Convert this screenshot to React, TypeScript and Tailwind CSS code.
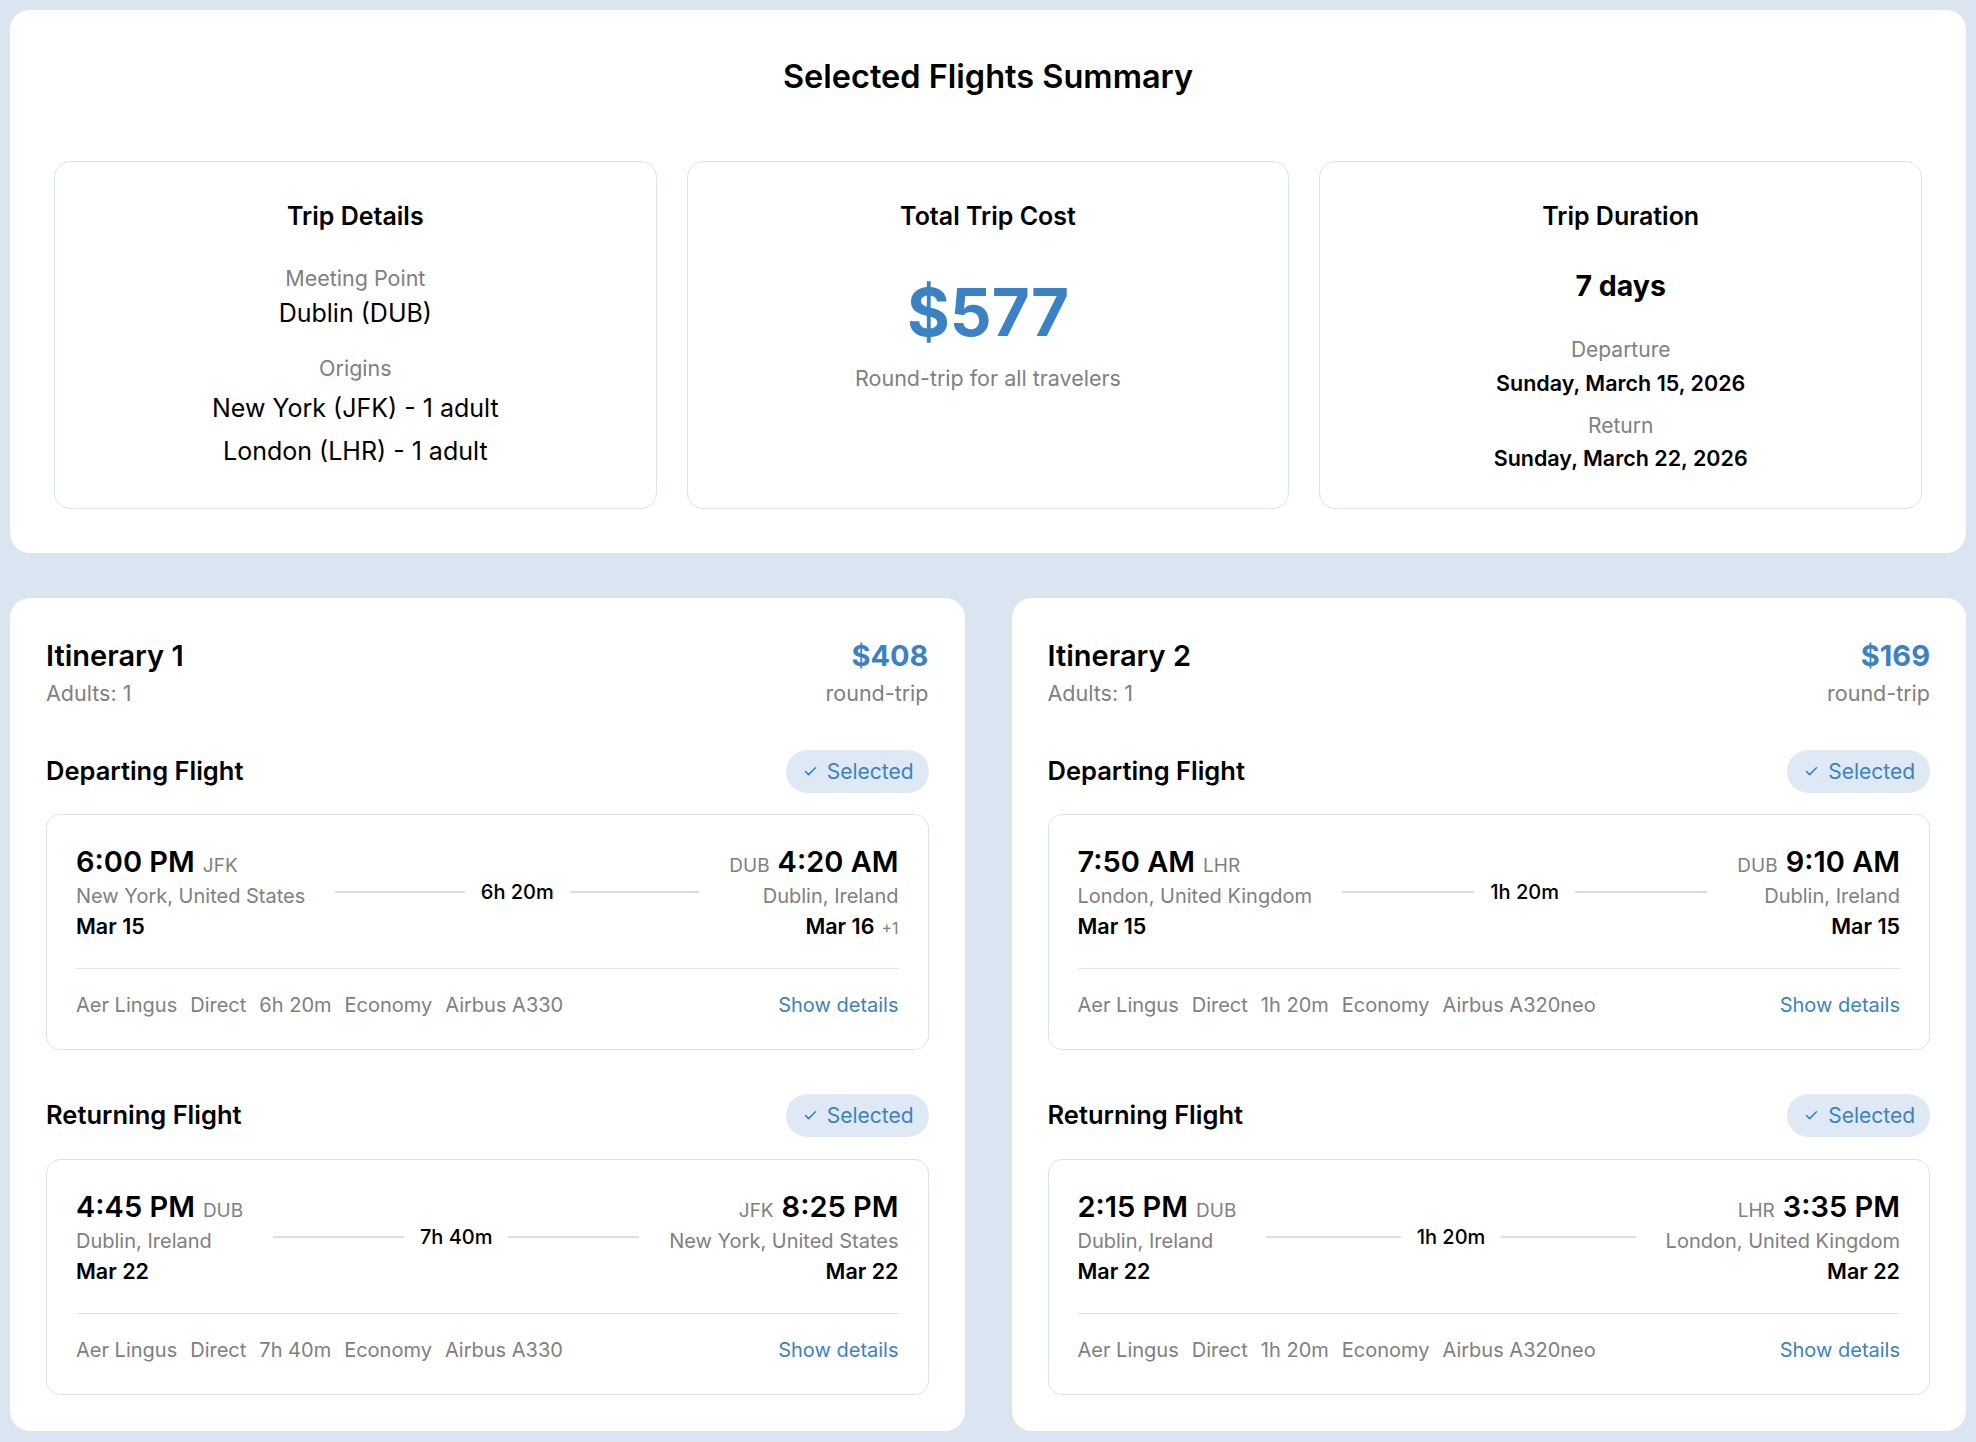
import React from "react";

type Flight = {
  depTime: string;
  depCode: string;
  depCity: string;
  depDate: string;
  arrTime: string;
  arrCode: string;
  arrCity: string;
  arrDate: string;
  plusDay?: string;
  duration: string;
  aircraft: string;
};

const itineraries: { name: string; price: string; flights: [Flight, Flight] }[] = [
  {
    name: "Itinerary 1",
    price: "$408",
    flights: [
      {
        depTime: "6:00 PM",
        depCode: "JFK",
        depCity: "New York, United States",
        depDate: "Mar 15",
        arrTime: "4:20 AM",
        arrCode: "DUB",
        arrCity: "Dublin, Ireland",
        arrDate: "Mar 16",
        plusDay: "+1",
        duration: "6h 20m",
        aircraft: "Airbus A330",
      },
      {
        depTime: "4:45 PM",
        depCode: "DUB",
        depCity: "Dublin, Ireland",
        depDate: "Mar 22",
        arrTime: "8:25 PM",
        arrCode: "JFK",
        arrCity: "New York, United States",
        arrDate: "Mar 22",
        duration: "7h 40m",
        aircraft: "Airbus A330",
      },
    ],
  },
  {
    name: "Itinerary 2",
    price: "$169",
    flights: [
      {
        depTime: "7:50 AM",
        depCode: "LHR",
        depCity: "London, United Kingdom",
        depDate: "Mar 15",
        arrTime: "9:10 AM",
        arrCode: "DUB",
        arrCity: "Dublin, Ireland",
        arrDate: "Mar 15",
        duration: "1h 20m",
        aircraft: "Airbus A320neo",
      },
      {
        depTime: "2:15 PM",
        depCode: "DUB",
        depCity: "Dublin, Ireland",
        depDate: "Mar 22",
        arrTime: "3:35 PM",
        arrCode: "LHR",
        arrCity: "London, United Kingdom",
        arrDate: "Mar 22",
        duration: "1h 20m",
        aircraft: "Airbus A320neo",
      },
    ],
  },
];

function CheckIcon() {
  return (
    <svg width="15" height="15" viewBox="0 0 24 24" fill="none" stroke="currentColor" strokeWidth="2.6" strokeLinecap="round" strokeLinejoin="round">
      <path d="M20 6 9 17l-5-5" />
    </svg>
  );
}

function SelectedPill() {
  return (
    <div className="flex h-[43px] items-center gap-[9px] rounded-full bg-[#dfe9f5] pl-[17px] pr-[15px] text-[#3b82c4]">
      <CheckIcon />
      <span className="text-[21px] leading-[28px]">Selected</span>
    </div>
  );
}

function FlightCard({ f }: { f: Flight }) {
  return (
    <div className="rounded-[14px] border border-[#dde3ec] bg-white px-[29px] pt-[29px] pb-[30px]">
      <div className="flex items-center gap-[30px]">
        <div className="flex flex-col">
          <div className="flex h-[36px] items-baseline gap-[8px]">
            <span className="text-[29px] leading-[36px] font-semibold text-black">{f.depTime}</span>
            <span className="text-[19px] leading-[36px] text-[#808080]">{f.depCode}</span>
          </div>
          <div className="mt-[2px] text-[20px] leading-[28px] text-[#808080]">{f.depCity}</div>
          <div className="mt-[2px] text-[21.5px] leading-[28px] font-semibold text-black">{f.depDate}</div>
        </div>
        <div className="flex flex-1 items-center gap-[16px]">
          <div className="h-[2px] flex-1 bg-[#d8dee8]" />
          <span className="text-[20px] font-medium text-black">{f.duration}</span>
          <div className="h-[2px] flex-1 bg-[#d8dee8]" />
        </div>
        <div className="flex flex-col items-end text-right">
          <div className="flex h-[36px] items-baseline gap-[8px]">
            <span className="text-[19px] leading-[36px] text-[#808080]">{f.arrCode}</span>
            <span className="text-[29px] leading-[36px] font-semibold text-black">{f.arrTime}</span>
          </div>
          <div className="mt-[2px] text-[20px] leading-[28px] text-[#808080]">{f.arrCity}</div>
          <div className="mt-[2px] h-[28px] text-[21.5px] leading-[28px] font-semibold text-black">
            <span>{f.arrDate}</span>
            {f.plusDay && (
              <span className="ml-[7px] align-baseline text-[16px] leading-none font-normal text-[#808080]">{f.plusDay}</span>
            )}
          </div>
        </div>
      </div>
      <div className="mt-[28px] flex items-center justify-between border-t border-[#e0e4eb] pt-[22px]">
        <div className="flex gap-[13px] text-[20px] leading-[28px] text-[#808080]">
          <span>Aer Lingus</span>
          <span>Direct</span>
          <span>{f.duration}</span>
          <span>Economy</span>
          <span>{f.aircraft}</span>
        </div>
        <span className="text-[20px] leading-[28px] text-[#3b82c4]">Show details</span>
      </div>
    </div>
  );
}

function Itinerary({ it }: { it: (typeof itineraries)[number] }) {
  return (
    <div className="rounded-[20px] bg-white px-[36px] pt-[40px] pb-[36px]">
      <div className="flex justify-between">
        <div>
          <div className="text-[29px] leading-[36px] font-semibold text-black">{it.name}</div>
          <div className="mt-[5px] text-[21.5px] leading-[28px] text-[#808080]">Adults: 1</div>
        </div>
        <div className="text-right">
          <div className="text-[29px] leading-[36px] font-bold text-[#3b82c4]">{it.price}</div>
          <div className="mt-[5px] text-[21.5px] leading-[28px] text-[#808080]">round-trip</div>
        </div>
      </div>
      <div className="mt-[43px] flex items-center justify-between">
        <span className="text-[25.5px] font-semibold text-black">Departing Flight</span>
        <SelectedPill />
      </div>
      <div className="mt-[21px]">
        <FlightCard f={it.flights[0]} />
      </div>
      <div className="mt-[44px] flex items-center justify-between">
        <span className="text-[25.5px] font-semibold text-black">Returning Flight</span>
        <SelectedPill />
      </div>
      <div className="mt-[22px]">
        <FlightCard f={it.flights[1]} />
      </div>
    </div>
  );
}

export default function App() {
  return (
    <div
      className="min-h-screen bg-[#dbe4f1] px-[10px] pt-[10px] pb-[12px] text-black"
      style={{ fontFamily: "Inter, 'Noto Sans', sans-serif" }}
    >
      <div className="rounded-[20px] bg-white px-[44px] pt-[44px] pb-[44px]">
        <h1 className="text-center text-[32.5px] leading-[46px] font-semibold text-black">Selected Flights Summary</h1>
        <div className="mt-[61px] grid grid-cols-3 gap-[30px]">
          <div className="h-[348px] rounded-[16px] border border-[#dde3ec] pt-[38px] text-center">
            <div className="text-[25px] leading-[32px] font-semibold">Trip Details</div>
            <div className="mt-[32px] text-[21.5px] leading-[28px] text-[#808080]">Meeting Point</div>
            <div className="mt-[5px] text-[25px] leading-[32px]">Dublin (DUB)</div>
            <div className="mt-[25px] text-[21.5px] leading-[28px] text-[#808080]">Origins</div>
            <div className="mt-[10px] text-[25px] leading-[32px]">New York (JFK) - 1 adult</div>
            <div className="mt-[11px] text-[25px] leading-[32px]">London (LHR) - 1 adult</div>
          </div>
          <div className="h-[348px] rounded-[16px] border border-[#dde3ec] pt-[38px] text-center">
            <div className="text-[25px] leading-[32px] font-semibold">Total Trip Cost</div>
            <div className="mt-[41px] text-[65.5px] leading-[80px] font-bold text-[#3b82c4]">$577</div>
            <div className="mt-[11px] text-[21.5px] leading-[28px] text-[#808080]">Round-trip for all travelers</div>
          </div>
          <div className="h-[348px] rounded-[16px] border border-[#dde3ec] pt-[38px] text-center">
            <div className="text-[25px] leading-[32px] font-semibold">Trip Duration</div>
            <div className="mt-[34px] text-[28.5px] leading-[40px] font-bold">7 days</div>
            <div className="mt-[30px] text-[21px] leading-[28px] text-[#808080]">Departure</div>
            <div className="mt-[4px] text-[21.5px] leading-[30px] font-semibold">Sunday, March 15, 2026</div>
            <div className="mt-[14px] text-[21px] leading-[28px] text-[#808080]">Return</div>
            <div className="mt-[3px] text-[21.5px] leading-[30px] font-semibold">Sunday, March 22, 2026</div>
          </div>
        </div>
      </div>
      <div className="mt-[45px] grid grid-cols-2 gap-[47px]">
        {itineraries.map((it) => (
          <Itinerary key={it.name} it={it} />
        ))}
      </div>
    </div>
  );
}
